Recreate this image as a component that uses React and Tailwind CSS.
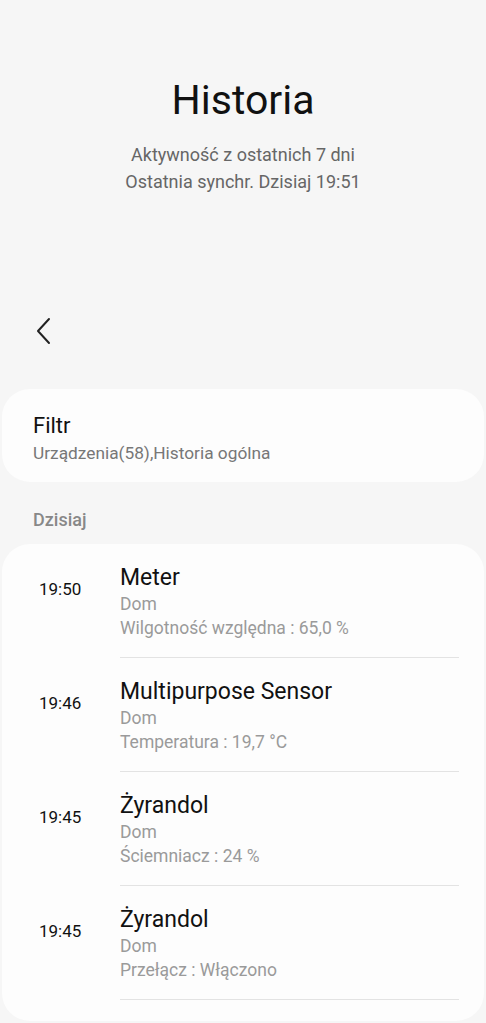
import React from 'react';

const events = [
  { time: '19:50', name: 'Meter', place: 'Dom', detail: 'Wilgotność względna : 65,0 %' },
  { time: '19:46', name: 'Multipurpose Sensor', place: 'Dom', detail: 'Temperatura : 19,7 °C' },
  { time: '19:45', name: 'Żyrandol', place: 'Dom', detail: 'Ściemniacz : 24 %' },
  { time: '19:45', name: 'Żyrandol', place: 'Dom', detail: 'Przełącz : Włączono' },
];

const EventRow = ({ item }) => (
  <div className="flex">
    <div className="w-[81px] shrink-0 pt-[33px] text-[17px] leading-[24px] text-[#111]">{item.time}</div>
    <div className="flex-1 border-b border-[#e3e3e3] pt-[20px] pb-[17px]">
      <div className="text-[23px] leading-[28px] text-[#111]">{item.name}</div>
      <div className="text-[17.5px] leading-[24px] text-[#9a9a9a]">{item.place}</div>
      <div className="text-[17.5px] leading-[24px] text-[#9a9a9a]">{item.detail}</div>
    </div>
  </div>
);

export default function App() {
  return (
    <div
      className="h-[1023px] overflow-hidden bg-[#f6f6f6] px-[2px]"
      style={{ fontFamily: 'Roboto, "Noto Sans", sans-serif' }}
    >
      {/* Nagłówek */}
      <div className="pt-[76px] text-center">
        <h1 className="text-[41px] leading-[48px] text-[#111]">Historia</h1>
        <div className="mt-[17px] text-[18px] leading-[27px] text-[#666]">
          <p>Aktywność z ostatnich 7 dni</p>
          <p>Ostatnia synchr. Dzisiaj 19:51</p>
        </div>
      </div>

      {/* Wstecz */}
      <div className="mt-[122px] pl-[33px]">
        <svg width="18" height="28" viewBox="0 0 18 28" fill="none">
          <path d="M14 2 L3 14 L14 26" stroke="#222" strokeWidth="2" strokeLinecap="round" strokeLinejoin="round" />
        </svg>
      </div>

      {/* Filtr */}
      <div className="mt-[44px] h-[93px] rounded-[28px] bg-[#fdfdfd] pl-[31px] pt-[24px]">
        <div className="text-[22px] leading-[26px] text-[#111]">Filtr</div>
        <div className="text-[17.3px] leading-[28px] text-[#777]">Urządzenia(58),Historia ogólna</div>
      </div>

      <div className="mt-[26px] pl-[31px] text-[18px] font-medium leading-[24px] text-[#888]">Dzisiaj</div>

      {/* Lista */}
      <div className="mt-[12px] h-[477px] rounded-[28px] bg-[#fdfdfd] pl-[37px] pr-[25px]">
        {events.map((item, i) => (
          <EventRow key={i} item={item} />
        ))}
      </div>
    </div>
  );
}
